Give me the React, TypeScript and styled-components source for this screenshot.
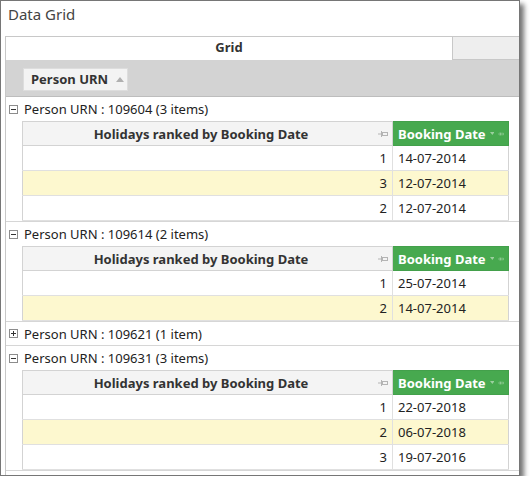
import * as React from 'react'
import styled, { createGlobalStyle } from 'styled-components'

const GlobalStyle = createGlobalStyle`
	body {
		margin: 0;
		background: #fff;
		font-family: "Noto Sans", "Open Sans", sans-serif;
	}
`

const Window = styled.div`
	width: 520px;
	height: 476px;
	box-sizing: border-box;
	border: 1px solid #767676;
	box-shadow: 4px 4px 5px rgba(0, 0, 0, 0.55);
	background: #fff;
	display: flex;
	flex-direction: column;
	overflow: hidden;
`

const Caption = styled.div`
	height: 35px;
	box-sizing: border-box;
	padding: 3px 0 0 7px;
	font-size: 15px;
	color: #444;
`

const Grid = styled.div`
	flex: 1;
	margin-left: 4px;
	border-left: 1px solid #c8c8c8;
	display: flex;
	flex-direction: column;
`

const TabStrip = styled.div`
	display: flex;
	height: 24px;
`

interface TabProps {
	active?: boolean
}
const Tab = styled.div<TabProps>`
	box-sizing: border-box;
	flex: ${({ active }) => active ? 1 : '0 0 67px'};
	border-top: 1px solid #c8c8c8;
	border-left: ${({ active }) => active ? 'none' : '1px solid #c8c8c8'};
	border-bottom: ${({ active }) => active ? 'none' : '1px solid #c8c8c8'};
	background: ${({ active }) => active ? '#fff' : '#eeeeee'};
	font-size: 13px;
	font-weight: bold;
	color: #333;
	text-align: center;
	line-height: 21px;
`

const GroupPanel = styled.div`
	height: 37px;
	box-sizing: border-box;
	padding: 7px 0 0 17px;
	background: #d3d3d3;
	border-bottom: 1px solid #bdbdbd;
`

const GroupChip = styled.div`
	display: inline-flex;
	align-items: center;
	gap: 8px;
	height: 23px;
	box-sizing: border-box;
	padding: 0 3px 0 7px;
	background: #f3f3f3;
	border: 1px solid #dddddd;
	font-size: 13px;
	font-weight: bold;
	color: #333;
`

const Group = styled.div`
	border-bottom: 1px solid #d6d6d6;
`

interface GroupRowProps {
	open?: boolean
}
const GroupRow = styled.div<GroupRowProps>`
	height: ${({ open }) => open ? 24 : 23}px;
	display: flex;
	align-items: center;
	gap: 6px;
	padding-left: 3px;
	font-size: 13px;
	color: #222;
`

const Table = styled.table`
	margin-left: 16px;
	width: 487px;
	border-collapse: collapse;
	table-layout: fixed;
	font-size: 13px;
	color: #222;
`

interface HeadCellProps {
	sorted?: boolean
}
const HeadCell = styled.th<HeadCellProps>`
	height: 23px;
	padding: 0 4px 0 5px;
	border: 1px solid ${({ sorted }) => sorted ? '#43a04b' : '#d3d3d3'};
	background: ${({ sorted }) => sorted ? '#47a94f' : '#f4f4f4'};
	color: ${({ sorted }) => sorted ? '#fff' : '#333'};
	font-size: 13px;
	font-weight: bold;
`

const HeadInner = styled.div<HeadCellProps>`
	display: flex;
	align-items: center;
	gap: 4px;
	& > span {
		flex: 1;
		text-align: ${({ sorted }) => sorted ? 'left' : 'center'};
		white-space: nowrap;
	}
`

interface RowProps {
	alt?: boolean
}
const Row = styled.tr<RowProps>`
	background: ${({ alt }) => alt ? '#fdf8cf' : '#fff'};
`

interface CellProps {
	numeric?: boolean
}
const Cell = styled.td<CellProps>`
	height: 24px;
	padding: 0 5px;
	border: 1px solid #e0e0e0;
	border-left-color: #d3d3d3;
	text-align: ${({ numeric }) => numeric ? 'right' : 'left'};
	&:last-child {
		border-right-color: #d3d3d3;
	}
`

const ExpandBox: React.FC<{ open: boolean }> = ({ open }) => (
	<svg width="9" height="9" viewBox="0 0 9 9">
		<rect x="0.5" y="0.5" width="8" height="8" fill="#fff" stroke="#8c8c8c" />
		<line x1="2" y1="4.5" x2="7" y2="4.5" stroke="#333" />
		{!open && <line x1="4.5" y1="2" x2="4.5" y2="7" stroke="#333" />}
	</svg>
)

const Pin: React.FC<{ color: string }> = ({ color }) => (
	<svg width="10" height="8" viewBox="0 0 10 8">
		<line x1="0" y1="4" x2="3" y2="4" stroke={color} />
		<line x1="3.5" y1="1" x2="3.5" y2="7" stroke={color} />
		<rect x="4.5" y="2.5" width="5" height="3" fill="none" stroke={color} />
	</svg>
)

const Arrow: React.FC<{ up?: boolean; color: string }> = ({ up, color }) => (
	<svg width="8" height="5" viewBox="0 0 8 5">
		<polygon points={up ? '0,5 8,5 4,0' : '0,0 8,0 4,5'} fill={color} />
	</svg>
)

interface Booking {
	rank: number
	date: string
}
interface PersonGroup {
	urn: string
	open: boolean
	rows: Booking[]
}

const groups: PersonGroup[] = [
	{ urn: '109604', open: true, rows: [{ rank: 1, date: '14-07-2014' }, { rank: 3, date: '12-07-2014' }, { rank: 2, date: '12-07-2014' }] },
	{ urn: '109614', open: true, rows: [{ rank: 1, date: '25-07-2014' }, { rank: 2, date: '14-07-2014' }] },
	{ urn: '109621', open: false, rows: [{ rank: 1, date: '' }] },
	{ urn: '109631', open: true, rows: [{ rank: 1, date: '22-07-2018' }, { rank: 2, date: '06-07-2018' }, { rank: 3, date: '19-07-2016' }] },
]

const BookingTable: React.FC<{ rows: Booking[] }> = ({ rows }) => (
	<Table>
		<colgroup>
			<col style={{ width: 370 }} />
			<col />
		</colgroup>
		<thead>
			<tr>
				<HeadCell>
					<HeadInner>
						<span>Holidays ranked by Booking Date</span>
						<Pin color="#b4b4b4" />
					</HeadInner>
				</HeadCell>
				<HeadCell sorted>
					<HeadInner sorted>
						<span>Booking Date</span>
						<Arrow color="#9ccf9f" />
						<Pin color="#9ccf9f" />
					</HeadInner>
				</HeadCell>
			</tr>
		</thead>
		<tbody>
			{rows.map((r, i) => (
				<Row key={i} alt={i % 2 === 1}>
					<Cell numeric>{r.rank}</Cell>
					<Cell>{r.date}</Cell>
				</Row>
			))}
		</tbody>
	</Table>
)

export default function App() {
	return (
		<>
			<GlobalStyle />
			<Window>
				<Caption>Data Grid</Caption>
				<Grid>
					<TabStrip>
						<Tab active>Grid</Tab>
						<Tab />
					</TabStrip>
					<GroupPanel>
						<GroupChip>
							Person URN
							<Arrow up color="#b0b0b0" />
						</GroupChip>
					</GroupPanel>
					{groups.map(g => (
						<Group key={g.urn}>
							<GroupRow open={g.open}>
								<ExpandBox open={g.open} />
								Person URN : {g.urn} ({g.rows.length} {g.rows.length === 1 ? 'item' : 'items'})
							</GroupRow>
							{g.open && <BookingTable rows={g.rows} />}
						</Group>
					))}
				</Grid>
			</Window>
		</>
	)
}
